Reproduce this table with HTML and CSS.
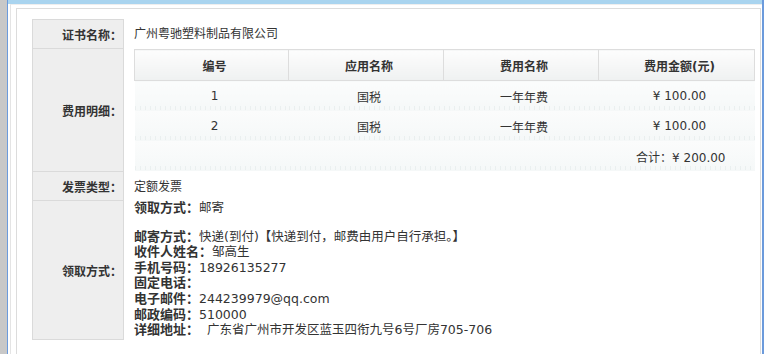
FILE: index.html
```html
<!DOCTYPE html>
<html lang="zh-CN">
<head>
    <meta charset="UTF-8">
    <title>证书详情</title>
    <link rel="stylesheet" href="styles.css">
</head>
<body>
    <div class="shell">
        <div class="page">
            <div class="topbar"></div>
            <div class="inner">
                <div class="panel">
                    <div class="form">
                        <div class="label">证书名称：</div>
                        <div class="value value-name">广州粤驰塑料制品有限公司</div>

                        <div class="label">费用明细：</div>
                        <div class="value fees-cell">
                            <table class="fees">
                                <colgroup>
                                    <col class="col-no">
                                    <col class="col-app">
                                    <col class="col-fee">
                                    <col class="col-amount">
                                </colgroup>
                                <thead>
                                    <tr><th>编号</th><th>应用名称</th><th>费用名称</th><th>费用金额(元)</th></tr>
                                </thead>
                                <tbody>
                                    <tr><td>1</td><td>国税</td><td>一年年费</td><td>¥ 100.00</td></tr>
                                    <tr><td>2</td><td>国税</td><td>一年年费</td><td>¥ 100.00</td></tr>
                                    <tr class="total"><td colspan="4">合计：¥ 200.00</td></tr>
                                </tbody>
                            </table>
                        </div>

                        <div class="label">发票类型：</div>
                        <div class="value">定额发票</div>

                        <div class="label label-last">领取方式：</div>
                        <div class="value delivery">
                            <p class="line line-first"><b>领取方式：</b>邮寄</p>
                            <p class="line"><b>邮寄方式：</b>快递(到付)【快递到付，邮费由用户自行承担。】</p>
                            <p class="line"><b>收件人姓名：</b>邹高生</p>
                            <p class="line"><b>手机号码：</b>18926135277</p>
                            <p class="line"><b>固定电话：</b></p>
                            <p class="line"><b>电子邮件：</b>244239979@qq.com</p>
                            <p class="line"><b>邮政编码：</b>510000</p>
                            <p class="line"><b>详细地址：</b>&nbsp;&nbsp;广东省广州市开发区蓝玉四衔九号6号厂房705-706</p>
                        </div>
                    </div>
                </div>
            </div>
        </div>
    </div>
</body>
</html>
```

FILE: styles.css
```css
body {
    margin: 0;
    background: #fff;
    color: #333;
    font-family: "DejaVu Sans", "Noto Sans CJK SC", sans-serif;
    font-size: 12px;
}

/* window chrome: grey strip, blue frame lines */
.shell {
    border-left: 7px solid #c8c8c8;
    height: 354px;
    overflow: hidden;
}

.page {
    border-left: 1px solid #6c9bdc;
    border-right: 2px solid #6c9bdc;
    margin-right: 1px;
    height: 354px;
}

.topbar {
    height: 4px;
    background: #a9d4ef;
}

.inner {
    margin-left: 2px;
    border-left: 1px solid #e4e4e4;
    border-top: 1px solid #eeeeee;
    padding: 3px 0 0 5px;
    height: 349px;
}

.panel {
    border: 1px solid #dcdcdc;
    border-bottom: none;
    margin-right: 1px;
    padding: 10px 0 0 15px;
    height: 340px;
    background: #fff;
}

/* label / value grid */
.form {
    display: grid;
    grid-template-columns: 92px 1fr;
    grid-template-rows: 29px 123px 29px 140px;
    width: 724px;
}

.label {
    display: flex;
    align-items: center;
    justify-content: flex-end;
    padding: 0 1px 0 0;
    background: #eeeeee;
    border: 1px solid #dadada;
    border-bottom: none;
    font-weight: bold;
    box-sizing: border-box;
}

.label-last {
    border-bottom: 1px solid #dadada;
}

.value {
    display: flex;
    align-items: center;
    padding-left: 10px;
}

.value-name {
    padding-bottom: 3px;
}

.fees-cell {
    align-items: flex-start;
    padding-top: 1px;
}

/* fee detail table */
.fees {
    width: 620px;
    border-collapse: collapse;
    table-layout: fixed;
}

.col-no { width: 154px; }
.col-app { width: 155px; }
.col-fee { width: 155px; }
.col-amount { width: 156px; }

.fees th {
    height: 30px;
    padding: 0 0 0 6px;
    border: 1px solid #dddddd;
    background: linear-gradient(#fdfdfd, #eff1f1);
    font-weight: bold;
    text-align: center;
}

.fees td {
    height: 30px;
    padding: 0 0 0 6px;
    text-align: center;
    background:
        repeating-linear-gradient(90deg, rgba(220, 228, 228, 0.45) 0 1px, transparent 1px 5px) left bottom 1px / 100% 4px no-repeat,
        linear-gradient(#fbfcfc, #f5f8f8);
}

.fees .total td {
    text-align: right;
    padding-right: 29px;
}

/* delivery details */
.delivery {
    display: block;
    font-size: 12.5px;
}

.line {
    margin: 0;
    line-height: 15.6px;
    white-space: nowrap;
}

.line-first {
    margin-bottom: 13px;
}

.line b {
    font-size: 13px;
}
```
